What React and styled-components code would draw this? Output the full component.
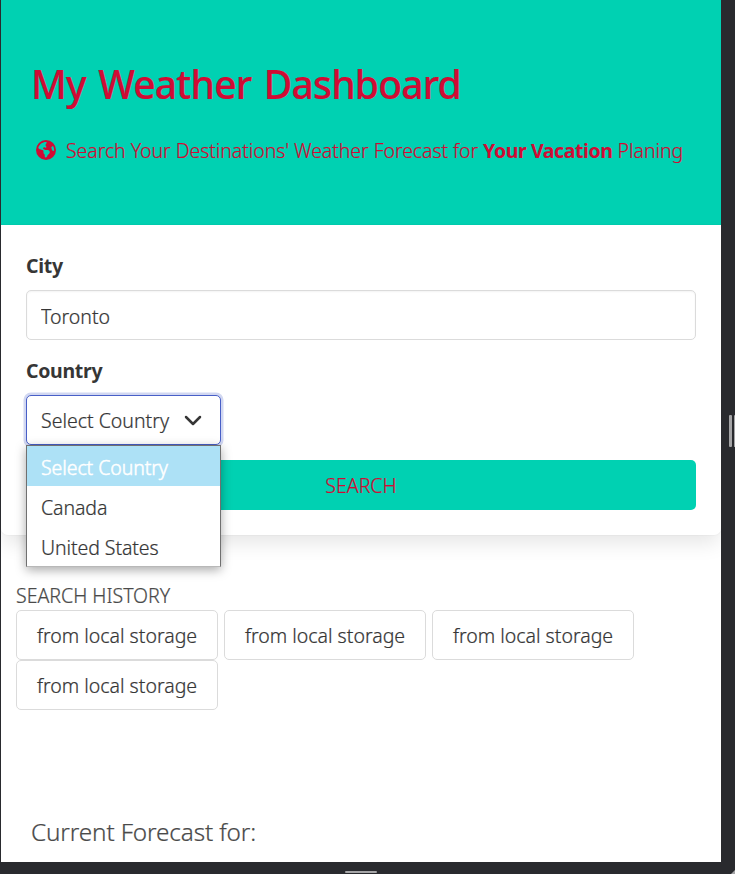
import React from "react";
import styled, { createGlobalStyle } from "styled-components";
import { FaEarthAmericas } from "react-icons/fa6";

const GlobalStyle = createGlobalStyle`
  *, *::before, *::after { box-sizing: border-box; }
  body {
    margin: 0;
    background: #292a2e;
    font: 300 19.5px/30px "Noto Sans", "Open Sans", sans-serif;
    -webkit-text-stroke: 0.22px currentColor;
    color: #4a4a4a;
    overflow: hidden;
  }
`;

const Frame = styled.div`
  display: grid;
  grid-template: 862px 12px / 720px 14px;
  width: 735px;
  height: 874px;
  border-left: 1px solid #292a2e;
  background: #292a2e;
`;

const Page = styled.main`
  display: flex;
  flex-direction: column;
  overflow: hidden;
  background: #fff;
`;

const SideRail = styled.aside`
  display: flex;
  align-items: center;
  justify-content: flex-end;
  gap: 2px;
  overflow: hidden;
`;

const Grip = styled.span`
  flex: none;
  width: ${(p) => p.$width}px;
  height: ${(p) => p.$height}px;
  border-radius: 1px;
  background: #a5a5a7;
`;

const BottomRail = styled.footer`
  grid-column: 1 / -1;
  display: flex;
  align-items: flex-end;
  justify-content: space-between;
  padding-left: 344px;
`;

const BottomGrip = styled(Grip)`
  margin-bottom: 1px;
`;

const Corner = styled.svg`
  display: block;
  width: 4px;
  height: 4px;
`;

const Hero = styled.header`
  flex: none;
  height: 225px;
  padding: 59px 30px 0;
  background: #00d1b2;
  color: #d00b34;
`;

const Title = styled.h1`
  margin: 0;
  font-size: 39px;
  font-weight: 500;
  line-height: 50px;
  letter-spacing: -0.8px;
  word-spacing: 3px;
  white-space: nowrap;
`;

const Subtitle = styled.p`
  display: flex;
  align-items: center;
  margin: 27px 0 0;
  padding-left: 5px;
  white-space: pre;
  letter-spacing: -0.07px;

  svg { margin: -3px 10px 0 0; }
`;

const Strong = styled.strong`
  font-weight: 700;
  letter-spacing: -0.4px;
  -webkit-text-stroke: 0;
`;

const SearchCard = styled.section`
  flex: none;
  display: flex;
  flex-direction: column;
  height: 310px;
  padding: 25px;
  border-radius: 0 0 7px 7px;
  box-shadow: 0 10px 20px -2px rgba(10, 10, 10, 0.1), 0 0 0 1px rgba(10, 10, 10, 0.02);
`;

const Label = styled.label`
  height: 30px;
  padding-top: 1px;
  margin-bottom: 10px;
  color: #363636;
  font-weight: 700;
  letter-spacing: -0.3px;
  -webkit-text-stroke: 0;
`;

const TextField = styled.input`
  width: 100%;
  height: 50px;
  margin-bottom: 15px;
  padding: 2px 14px 0;
  border: 1px solid #dbdbdb;
  border-radius: 5px;
  outline: 0;
  box-shadow: inset 0 1px 2px rgba(10, 10, 10, 0.05);
  background: #fff;
  color: #363636;
  font: inherit;
`;

const SelectWrap = styled.div`
  position: relative;
  width: 195px;
  margin-bottom: 15px;
`;

const SelectBox = styled.button`
  display: flex;
  align-items: center;
  justify-content: space-between;
  width: 100%;
  height: 50px;
  padding: 2px 17px 0 14px;
  border: 1px solid #485fc7;
  border-radius: 5px;
  box-shadow: 0 0 0 2.5px rgba(72, 95, 199, 0.25);
  background: #fff;
  color: #363636;
  font: inherit;
  white-space: nowrap;

  svg { margin-top: -1px; }
`;

const Menu = styled.ul`
  position: absolute;
  z-index: 2;
  top: 50px;
  left: 0;
  width: 195px;
  margin: 0;
  padding: 0;
  border: 1px solid #707070;
  border-bottom-color: #b8b8b8;
  box-shadow: 0 3px 10px rgba(0, 0, 0, 0.34);
  background: #fff;
  list-style: none;
`;

const Option = styled.li`
  height: 40px;
  padding: 2px 14px 0;
  background: ${(p) => (p.$active ? "#ade1f6" : "#fff")};
  color: ${(p) => (p.$active ? "#fff" : "#363636")};
  line-height: 40px;
  letter-spacing: -0.08px;
  -webkit-text-stroke-width: ${(p) => (p.$active ? 0.5 : 0.22)}px;
`;

const SearchButton = styled.button`
  height: 50px;
  padding: 2px 0 0;
  border: 0;
  border-radius: 5px;
  background: #00d1b2;
  color: #d00b34;
  font: inherit;
`;

const History = styled.section`
  margin-top: 45px;
  padding: 0 15px;
`;

const HistoryTitle = styled.div`
  padding-top: 1px;
  height: 30px;
`;

const HistoryList = styled.div`
  display: flex;
  flex-wrap: wrap;
  column-gap: 6px;
`;

const HistoryButton = styled.button`
  width: 202px;
  height: 50px;
  padding: 2px 0 0;
  border: 1px solid #dbdbdb;
  border-radius: 5px;
  background: #fff;
  color: #363636;
  font: inherit;
  white-space: nowrap;
`;

const ForecastTitle = styled.h2`
  margin: 107px 0 0;
  padding-left: 30px;
  font-size: 24.3px;
  font-weight: 300;
  letter-spacing: -0.13px;
`;

const options = ["Select Country", "Canada", "United States"];
const history = Array(4).fill("from local storage");

export default function App() {
  return (
    <>
      <GlobalStyle />
      <Frame>
        <Page>
          <Hero>
            <Title>My Weather Dashboard</Title>
            <Subtitle>
              <FaEarthAmericas size={20} />
              <span>
                Search Your Destinations' Weather Forecast for <Strong>Your Vacation</Strong> Planing
              </span>
            </Subtitle>
          </Hero>
          <SearchCard>
            <Label htmlFor="city">City</Label>
            <TextField id="city" defaultValue="Toronto" />
            <Label>Country</Label>
            <SelectWrap>
              <SelectBox type="button">
                Select Country
                <svg width="20" height="14" viewBox="0 0 20 14" fill="none" stroke="#363636" strokeWidth="2.5" strokeLinecap="round" strokeLinejoin="round">
                  <path d="M3 3 10 10 17 3" />
                </svg>
              </SelectBox>
              <Menu>
                {options.map((name, i) => (
                  <Option key={name} $active={i === 0}>{name}</Option>
                ))}
              </Menu>
            </SelectWrap>
            <SearchButton type="button">SEARCH</SearchButton>
          </SearchCard>
          <History>
            <HistoryTitle>SEARCH HISTORY</HistoryTitle>
            <HistoryList>
              {history.map((name, i) => (
                <HistoryButton key={i} type="button">{name}</HistoryButton>
              ))}
            </HistoryList>
          </History>
          <ForecastTitle>Current Forecast for:</ForecastTitle>
        </Page>
        <SideRail>
          <Grip $width={3} $height={32} />
          <Grip $width={1} $height={32} />
        </SideRail>
        <BottomRail>
          <BottomGrip $width={32} $height={2} />
          <Corner viewBox="0 0 4 4">
            <path d="M4 0V4H0Z" fill="#a5a5a7" />
          </Corner>
        </BottomRail>
      </Frame>
    </>
  );
}
